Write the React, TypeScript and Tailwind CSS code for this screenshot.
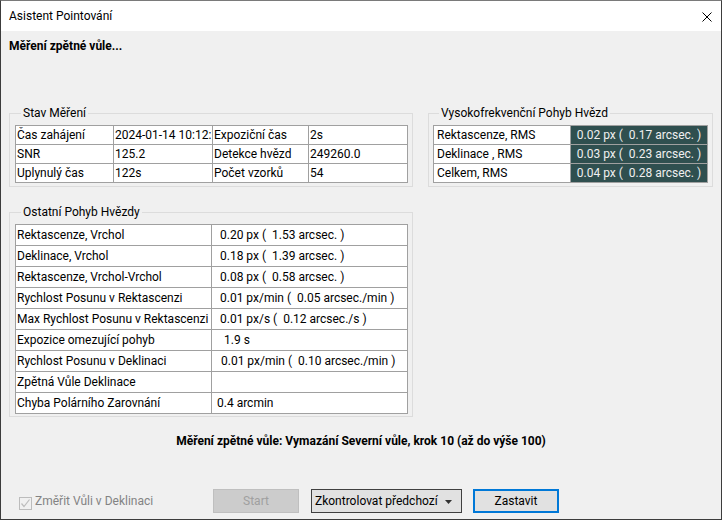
import React from "react";

const F = { fontFamily: "Roboto, 'Noto Sans', sans-serif" };

function Cell({ children, className = "" }: { children?: React.ReactNode; className?: string }) {
  return (
    <div className={"border-r border-b border-[#a0a0a0] flex items-center overflow-hidden whitespace-pre " + className}>
      {children}
    </div>
  );
}

export default function App() {
  const stav = [
    ["Čas zahájení", "2024-01-14 10:12:15", "Expoziční čas", "2s"],
    ["SNR", "125.2", "Detekce hvězd", "249260.0"],
    ["Uplynulý čas", "122s", "Počet vzorků", "54"],
  ];
  const hf = [
    ["Rektascenze, RMS", "0.02 px (  0.17 arcsec. )"],
    ["Deklinace , RMS", "0.03 px (  0.23 arcsec. )"],
    ["Celkem, RMS", "0.04 px (  0.28 arcsec. )"],
  ];
  const other: [string, string, string][] = [
    ["Rektascenze, Vrchol", "0.20 px (  1.53 arcsec. )", "pl-[8px]"],
    ["Deklinace, Vrchol", "0.18 px (  1.39 arcsec. )", "pl-[8px]"],
    ["Rektascenze, Vrchol-Vrchol", "0.08 px (  0.58 arcsec. )", "pl-[8px]"],
    ["Rychlost Posunu v Rektascenzi", "0.01 px/min (  0.05 arcsec./min )", "pl-[8px]"],
    ["Max Rychlost Posunu v Rektascenzi", "0.01 px/s (  0.12 arcsec./s )", "pl-[8px]"],
    ["Expozice omezující pohyb", "1.9 s", "pl-[12px]"],
    ["Rychlost Posunu v Deklinaci", "0.01 px/min (  0.10 arcsec./min )", "pl-[9px]"],
    ["Zpětná Vůle Deklinace", "", "pl-[8px]"],
    ["Chyba Polárního Zarovnání", "0.4 arcmin", "pl-[5px]"],
  ];

  return (
    <div style={F} className="w-[722px] h-[520px] flex flex-col border border-[#3c3c3c] border-t-[#7a7a7a] text-[12px] leading-[16px] text-black overflow-hidden">
      {/* Title bar */}
      <div className="h-[30px] bg-white flex items-center justify-between pl-[8px] pr-[9px] shrink-0">
        <span>Asistent Pointování</span>
        <svg width="10" height="10" viewBox="0 0 10 10" className="mt-[1px]">
          <path d="M0.5 0.5 L9.5 9.5 M9.5 0.5 L0.5 9.5" stroke="#000" strokeWidth="1" />
        </svg>
      </div>

      {/* Body */}
      <div className="flex-1 bg-[#f0f0f0] flex flex-col">
        <div className="pl-[8px] pt-[7px] font-bold">Měření zpětné vůle...</div>

        <div className="flex items-start mt-[51px] pl-[8px] gap-[15px]">
          <fieldset className="w-[404px] border border-[#dcdcdc] pl-[5px] pb-[3px]">
            <legend className="ml-[6px] px-[2px] leading-[16px]">Stav Měření</legend>
            <div className="mt-[4px] w-[393px] grid grid-cols-[98px_99px_96px_99px] border-l border-t border-[#a0a0a0] bg-white">
              {stav.map((r, i) => (
                <React.Fragment key={i}>
                  {r.map((c, j) => (
                    <Cell key={j} className="h-[19px] pl-[1px]">{c}</Cell>
                  ))}
                </React.Fragment>
              ))}
            </div>
          </fieldset>

          <fieldset className="w-[285px] border border-[#dcdcdc] pl-[4px] pb-[3px]">
            <legend className="ml-[6px] px-[2px] leading-[16px]">Vysokofrekvenční Pohyb Hvězd</legend>
            <div className="mt-[4px] w-[275px] grid grid-cols-[137px_137px] border-l border-t border-[#a0a0a0] bg-white">
              {hf.map((r, i) => (
                <React.Fragment key={i}>
                  <Cell className="h-[19px] pl-[3px]">{r[0]}</Cell>
                  <Cell className="h-[19px] justify-center bg-[#2f4f4f] text-[#f0f0f0]">{r[1]}</Cell>
                </React.Fragment>
              ))}
            </div>
          </fieldset>
        </div>

        <div className="pl-[8px] mt-[17px]">
          <fieldset className="w-[404px] border border-[#dcdcdc] pl-[5px] pb-[2px]">
            <legend className="ml-[6px] px-[2px] leading-[16px]">Ostatní Pohyb Hvězdy</legend>
            <div className="mt-[4px] w-[393px] grid grid-cols-[196px_196px] border-l border-t border-[#a0a0a0] bg-white">
              {other.map((r, i) => (
                <React.Fragment key={i}>
                  <Cell className="h-[21px] pl-[1px]">{r[0]}</Cell>
                  <Cell className={"h-[21px] " + r[2]}>{r[1]}</Cell>
                </React.Fragment>
              ))}
            </div>
          </fieldset>
        </div>

        <div className="mt-[16px] text-center font-bold">
          Měření zpětné vůle: Vymazání Severní vůle, krok 10 (až do výše 100)
        </div>

        <div className="mt-[40px] flex items-center pl-[18px]">
          <div className="w-[194px] flex items-center">
            <div className="w-[13px] h-[13px] border border-[#bcbcbc] flex items-center justify-center -mb-[4px]">
              <svg width="11" height="11" viewBox="0 0 11 11">
                <path d="M1.5 5.5 L4 8.5 L9.5 1.5" stroke="#bcbcbc" strokeWidth="1.2" fill="none" />
              </svg>
            </div>
            <span className="ml-[3px] text-[#838383]">Změřit Vůli v Deklinaci</span>
          </div>
          <div className="w-[86px] h-[24px] bg-[#cccccc] border border-[#bfbfbf] flex items-center justify-center text-[#a0a0a0]">
            Start
          </div>
          <div className="ml-[12px] w-[151px] h-[24px] bg-[#e1e1e1] border border-[#404040] flex items-center justify-between pl-[3px] pr-[9px]">
            <span>Zkontrolovat předchozí</span>
            <svg width="7" height="4" viewBox="0 0 7 4" className="mt-[2px]">
              <path d="M0 0 L7 0 L3.5 4 Z" fill="#333" />
            </svg>
          </div>
          <div className="ml-[11px] w-[86px] h-[24px] bg-[#e1e1e1] border-2 border-[#0078d7] flex items-center justify-center">
            Zastavit
          </div>
        </div>
      </div>
    </div>
  );
}
